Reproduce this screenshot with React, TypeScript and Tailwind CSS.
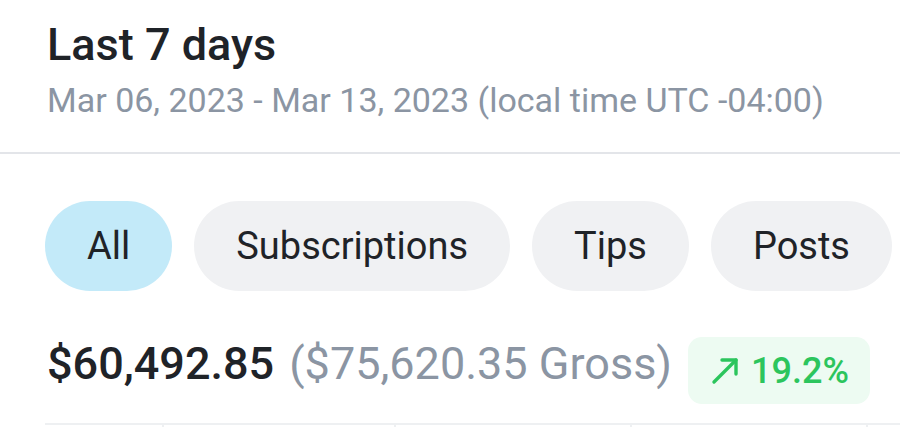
const filters = ["All", "Subscriptions", "Tips", "Posts"];

// small trend arrow drawn for the change badge
function TrendArrow() {
  return (
    <svg width="28" height="28" viewBox="0 0 28 28" fill="none" stroke="currentColor" strokeWidth="3.4" strokeLinecap="round" strokeLinejoin="round">
      <path d="M3 25 L25 3" />
      <path d="M11 3 H25 V17" />
    </svg>
  );
}

export default function App() {
  const active = "All";

  return (
    <div className="h-[427px] w-[900px] overflow-hidden bg-white font-['Roboto',sans-serif] text-[#1f2328]">
      <div className="px-[47px] pt-[19px] pb-[32px]">
        <h1 className="text-[45px] leading-[52px] font-medium">Last 7 days</h1>
        <p className="mt-[9px] text-[34px] leading-[40px] whitespace-nowrap text-[#8b95a3]">
          Mar 06, 2023 - Mar 13, 2023 (local time UTC -04:00)
        </p>
      </div>
      <div className="h-[2px] bg-[#e3e5e9]" />

      <div className="flex gap-[22px] pl-[45px] pt-[47px]">
        {filters.map((f) => (
          <button
            key={f}
            className={
              "h-[90px] shrink-0 rounded-full px-[42px] text-[38px] " +
              (f === active ? "bg-[#c3eaf9]" : "bg-[#f0f1f3]")
            }
          >
            {f}
          </button>
        ))}
      </div>

      <div className="flex items-start pl-[47px] pt-[46px]">
        <div className="mt-[1px] flex items-baseline whitespace-nowrap">
          <span className="text-[45px] leading-[52px] font-medium">$60,492.85</span>
          <span className="ml-[15px] text-[45px] leading-[52px] text-[#8b95a3]">($75,620.35 Gross)</span>
        </div>
        <div className="ml-[16px] flex h-[67px] items-center gap-[12px] rounded-[14px] bg-[#edfbf2] pr-[21px] pl-[23px] text-[36px] font-medium text-[#2cc55d]">
          <TrendArrow />
          19.2%
        </div>
      </div>

      <div className="mt-[19px] ml-[45px] flex h-[10px] border-t-2 border-[#eef0f2]">
        <div className="w-[119px] border-r-2 border-[#eef0f2]" />
        <div className="w-[232px] border-r-2 border-[#eef0f2]" />
        <div className="w-[236px] border-r-2 border-[#eef0f2]" />
        <div className="w-[236px] border-r-2 border-[#eef0f2]" />
      </div>
    </div>
  );
}
